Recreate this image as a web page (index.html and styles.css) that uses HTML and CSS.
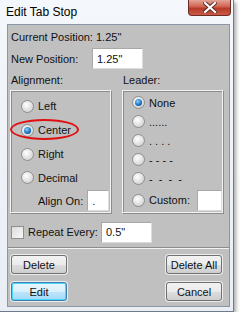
FILE: index.html
```html
<!DOCTYPE html>
<html lang="en">
<head>
  <meta charset="UTF-8" />
  <title>Edit Tab Stop</title>
  <link rel="stylesheet" href="styles.css">
</head>
<body>

  <div class="window">
    <!-- Title Bar -->
    <div class="titlebar">
      <span class="title">Edit Tab Stop</span>
      <span class="close-btn">
        <svg width="14" height="11" viewBox="0 0 14 11">
          <path d="M2 1 L12 10 M12 1 L2 10" stroke="#5a2a24" stroke-width="4" stroke-linecap="square"/>
          <path d="M2 1 L12 10 M12 1 L2 10" stroke="#fff" stroke-width="2.2" stroke-linecap="square"/>
        </svg>
      </span>
    </div>

    <!-- Client Area -->
    <div class="client">
      <div class="row current">Current Position: 1.25"</div>

      <div class="row new-pos">
        <span class="label-new">New Position:</span>
        <span class="field field-new">1.25"</span>
      </div>

      <div class="groups">
        <div class="group-col">
          <div class="group-title">Alignment:</div>
          <div class="group-box align-box">
            <div class="opt"><span class="radio"></span>Left</div>
            <div class="opt opt-center">
              <span class="radio checked"></span>Center
              <span class="highlight"></span>
            </div>
            <div class="opt"><span class="radio"></span>Right</div>
            <div class="opt opt-short"><span class="radio"></span>Decimal</div>
            <div class="opt opt-short align-on">Align On: <span class="field field-small">.</span></div>
          </div>
        </div>

        <div class="group-col">
          <div class="group-title">Leader:</div>
          <div class="group-box leader-box">
            <div class="opt"><span class="radio checked"></span>None</div>
            <div class="opt"><span class="radio"></span>......</div>
            <div class="opt"><span class="radio"></span>. . . .</div>
            <div class="opt"><span class="radio"></span>- - - -</div>
            <div class="opt"><span class="radio"></span>-&nbsp; -&nbsp; -&nbsp; -</div>
            <div class="opt opt-custom"><span class="radio"></span>Custom: <span class="field field-custom"></span></div>
          </div>
        </div>
      </div>

      <div class="row repeat">
        <span class="checkbox"></span>
        <span class="label-repeat">Repeat Every:</span>
        <span class="field field-repeat">0.5"</span>
      </div>

      <div class="separator"></div>

      <div class="buttons">
        <span class="btn">Delete</span>
        <span class="btn">Delete All</span>
      </div>
      <div class="buttons">
        <span class="btn btn-default">Edit</span>
        <span class="btn">Cancel</span>
      </div>
    </div>
  </div>

</body>
</html>
```

FILE: styles.css
```css
* {
  box-sizing: border-box;
}

body {
  margin: 0;
  background-color: #fff;
  font-family: 'Liberation Sans', Arial, sans-serif;
  font-size: 11px;
  color: #111;
}

/* Window frame */
.window {
  width: 234px;
  height: 312px;
  background: linear-gradient(to bottom, #f4f7fb, #e9eef5);
  border-right: 1px solid #6f7b88;
  border-bottom: 1px solid #6f7b88;
  box-shadow: 2px 2px 4px rgba(0, 0, 0, 0.35);
  display: flex;
  flex-direction: column;
}

.titlebar {
  height: 24px;
  display: flex;
  justify-content: space-between;
  align-items: flex-start;
}

.title {
  font-size: 12px;
  margin: 5px 0 0 6px;
  color: #000;
}

.close-btn {
  width: 43px;
  height: 16px;
  margin-right: 2px;
  border: 1px solid #6e2a24;
  border-top: none;
  border-radius: 0 0 4px 4px;
  background: linear-gradient(to bottom, #e3a598, #d0614f 45%, #b53a28 55%, #c95a45);
  display: flex;
  justify-content: center;
  align-items: center;
}

.client {
  flex-grow: 1;
  margin: 0 3px 4px 7px;
  background-color: #c0c0c0;
  border: 1px solid #8896a6;
  padding: 0 2px 0 2px;
  display: flex;
  flex-direction: column;
}

.row {
  display: flex;
  align-items: center;
}

.current {
  height: 21px;
  padding-left: 1px;
  margin-top: 1px;
}

.new-pos {
  height: 23px;
  padding-left: 1px;
}

.label-new {
  width: 81px;
}

.field {
  background-color: #fff;
  border: 1px solid #dcdcdc;
  border-top-color: #a8a8a8;
  border-left-color: #a8a8a8;
  display: inline-flex;
  align-items: center;
  padding-left: 4px;
}

.field-new {
  width: 51px;
  height: 21px;
}

/* Group boxes */
.groups {
  display: flex;
  gap: 11px;
}

.group-col {
  width: 101px;
}

.group-title {
  height: 20px;
  padding-left: 1px;
  padding-top: 4px;
}

.group-box {
  height: 123px;
  border: 1px solid #f2f2f2;
  box-shadow: inset 1px 1px 0 #8c8c8c, 1px 1px 0 #8c8c8c;
  padding-left: 10px;
}

.align-box {
  padding-top: 3px;
}

.leader-box {
  padding-top: 2px;
  padding-left: 9px;
}

.opt {
  height: 24px;
  display: flex;
  align-items: center;
  position: relative;
}

.opt-short {
  height: 23px;
}

.leader-box .opt {
  height: 19px;
}

.leader-box .opt-custom {
  height: 24px;
}

.align-on {
  padding-left: 17px;
}

.field-small {
  width: 22px;
  height: 21px;
  margin-left: 4px;
}

.field-custom {
  width: 27px;
  height: 21px;
  margin-left: 7px;
}

.radio {
  width: 13px;
  height: 13px;
  border-radius: 50%;
  border: 1px solid #8e8f8f;
  background: radial-gradient(circle at 40% 35%, #ffffff, #e6e6e6 45%, #c4c4c4);
  margin-right: 4px;
  flex-shrink: 0;
  display: inline-flex;
  justify-content: center;
  align-items: center;
}

.radio.checked::after {
  content: "";
  width: 7px;
  height: 7px;
  border-radius: 50%;
  background: radial-gradient(circle at 40% 35%, #8fd3ff, #1a73c4 55%, #0b3f7a);
}

/* red marker ring drawn over the Center option */
.highlight {
  position: absolute;
  left: -11px;
  top: 1px;
  width: 69px;
  height: 21px;
  border: 2.5px solid #e01010;
  border-radius: 50%;
}

/* Repeat row */
.repeat {
  height: 22px;
  margin-top: 8px;
  padding-left: 1px;
}

.checkbox {
  width: 13px;
  height: 13px;
  border: 1px solid #8e8f8f;
  background: linear-gradient(135deg, #dcdcdc, #f8f8f8);
  margin-right: 4px;
}

.label-repeat {
  width: 73px;
}

.field-repeat {
  width: 51px;
  height: 21px;
}

.separator {
  height: 2px;
  margin: 4px -2px 0 -2px;
  border-top: 1px solid #8c8c8c;
  border-bottom: 1px solid #f2f2f2;
}

/* Buttons */
.buttons {
  display: flex;
  justify-content: space-between;
  padding: 0 5px 0 1px;
  margin-top: 6px;
}

.buttons + .buttons {
  margin-top: 8px;
}

.btn {
  width: 56px;
  height: 19px;
  border: 1px solid #707070;
  border-radius: 3px;
  background: linear-gradient(to bottom, #f2f2f2 0%, #ebebeb 50%, #dddddd 51%, #cfcfcf 100%);
  box-shadow: 0 0 0 1px #ececec;
  display: flex;
  justify-content: center;
  align-items: center;
}

.btn-default {
  border-color: #3c7fb1;
  background: linear-gradient(to bottom, #eaf6fd 0%, #d9f0fc 50%, #bee6fd 51%, #a7d9f5 100%);
  box-shadow: 0 0 0 1px #ececec, inset 0 0 0 1px #48d6fc;
}
```
